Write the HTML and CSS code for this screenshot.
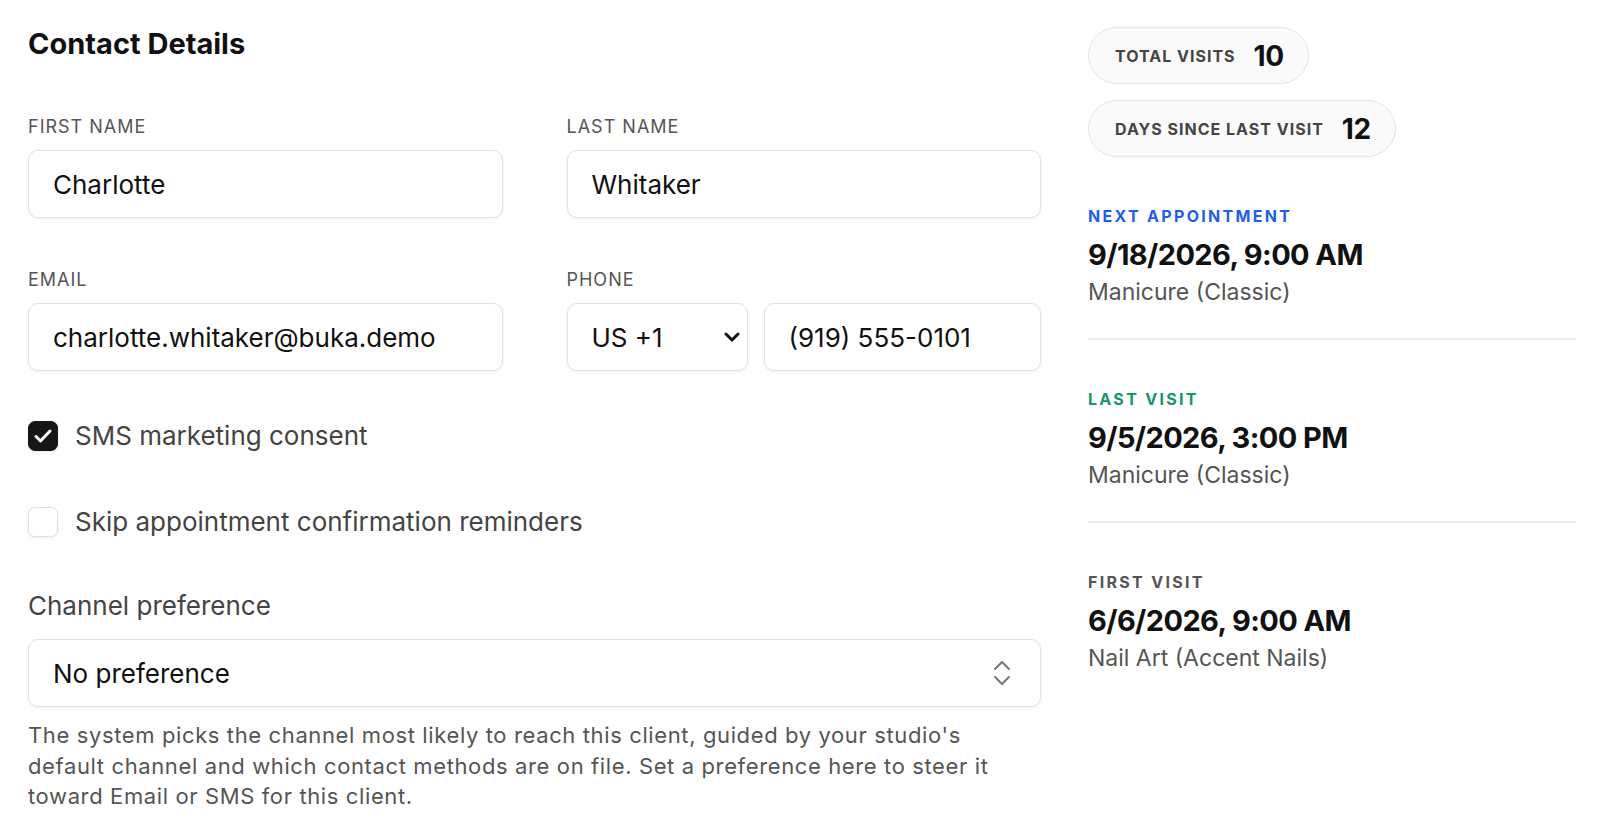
FILE: index.html
```html
<!DOCTYPE html>
<html lang="en">
<head>
<meta charset="utf-8">
<title>Contact Details</title>
<link rel="stylesheet" href="styles.css">
</head>
<body>
<div class="page">
  <section class="form">
    <h2 class="title">Contact Details</h2>

    <div class="row">
      <div class="field">
        <label class="label" for="fn">FIRST NAME</label>
        <input class="input" id="fn" type="text" value="Charlotte">
      </div>
      <div class="field">
        <label class="label" for="ln">LAST NAME</label>
        <input class="input" id="ln" type="text" value="Whitaker">
      </div>
    </div>

    <div class="row">
      <div class="field">
        <label class="label" for="em">EMAIL</label>
        <input class="input" id="em" type="text" value="charlotte.whitaker@buka.demo">
      </div>
      <div class="field">
        <label class="label" for="ph">PHONE</label>
        <div class="phone">
          <div class="select-wrap cc">
            <select class="input select">
              <option>US +1</option>
            </select>
            <svg class="chev" width="16" height="10" viewBox="0 0 16 10"><path d="M2 2 L8 8 L14 2" fill="none" stroke="#111" stroke-width="3" stroke-linecap="round" stroke-linejoin="round"/></svg>
          </div>
          <input class="input" id="ph" type="text" value="(919) 555-0101">
        </div>
      </div>
    </div>

    <div class="checks">
      <label class="check">
        <span class="box on">
          <svg width="20" height="16" viewBox="0 0 20 16"><path d="M3 8.5 L7.5 13 L17 3" fill="none" stroke="#fff" stroke-width="3" stroke-linecap="round" stroke-linejoin="round"/></svg>
        </span>
        <span class="check-text">SMS marketing consent</span>
      </label>
      <label class="check">
        <span class="box"></span>
        <span class="check-text">Skip appointment confirmation reminders</span>
      </label>
    </div>

    <div class="channel">
      <label class="channel-label">Channel preference</label>
      <div class="select-wrap">
        <select class="input select wide">
          <option>No preference</option>
        </select>
        <svg class="updown" width="18" height="26" viewBox="0 0 18 26"><path d="M2 9 L9 2 L16 9 M2 17 L9 24 L16 17" fill="none" stroke="#777" stroke-width="2" stroke-linecap="round" stroke-linejoin="round"/></svg>
      </div>
      <p class="help">The system picks the channel most likely to reach this client, guided by your studio's default channel and which contact methods are on file. Set a preference here to steer it toward Email or SMS for this client.</p>
    </div>
  </section>

  <aside class="side">
    <div class="pills">
      <div class="pill"><span class="pill-label">TOTAL VISITS</span><span class="pill-num">10</span></div>
      <div class="pill"><span class="pill-label">DAYS SINCE LAST VISIT</span><span class="pill-num">12</span></div>
    </div>

    <div class="visits">
      <div class="visit">
        <div class="visit-label blue">NEXT APPOINTMENT</div>
        <div class="visit-date">9/18/2026, 9:00 AM</div>
        <div class="visit-service">Manicure (Classic)</div>
      </div>
      <div class="visit">
        <div class="visit-label green">LAST VISIT</div>
        <div class="visit-date">9/5/2026, 3:00 PM</div>
        <div class="visit-service">Manicure (Classic)</div>
      </div>
      <div class="visit">
        <div class="visit-label gray">FIRST VISIT</div>
        <div class="visit-date">6/6/2026, 9:00 AM</div>
        <div class="visit-service">Nail Art (Accent Nails)</div>
      </div>
    </div>
  </aside>
</div>
</body>
</html>
```

FILE: styles.css
```css
* { box-sizing: border-box; }

html, body {
  margin: 0;
  padding: 0;
  background: #fff;
}

body {
  font-family: Inter, "Noto Sans", "Liberation Sans", sans-serif;
  color: #111;
}

.page {
  display: flex;
  align-items: flex-start;
  gap: 47px;
  padding: 0 24px 0 28px;
}

.form {
  width: 1013px;
  flex: none;
  padding-top: 27px;
}

.title {
  margin: 0;
  font-size: 29px;
  line-height: 34px;
  font-weight: 700;
  color: #111;
}

.row {
  display: grid;
  grid-template-columns: 1fr 1fr;
  column-gap: 64px;
  margin-top: 51px;
}

.row:first-of-type { margin-top: 55px; }

.field {
  display: flex;
  flex-direction: column;
}

.label {
  font-size: 18px;
  line-height: 22px;
  letter-spacing: 1px;
  color: #555;
  margin-bottom: 12px;
}

.input {
  height: 68px;
  width: 100%;
  border: 1px solid #e2e2e2;
  border-radius: 10px;
  background: #fff;
  box-shadow: 0 1px 3px rgba(0, 0, 0, 0.07);
  padding: 0 24px;
  font-family: inherit;
  font-size: 26px;
  color: #111;
  outline: none;
}

.phone {
  display: grid;
  grid-template-columns: 181px 1fr;
  gap: 16px;
}

.select-wrap {
  position: relative;
}

.select {
  appearance: none;
  -webkit-appearance: none;
  cursor: pointer;
}

.chev {
  position: absolute;
  right: 8px;
  top: 29px;
  pointer-events: none;
}

.updown {
  position: absolute;
  right: 30px;
  top: 21px;
  pointer-events: none;
}

.checks {
  display: flex;
  flex-direction: column;
  gap: 56px;
  margin-top: 50px;
}

.check {
  display: flex;
  align-items: center;
  gap: 17px;
  cursor: pointer;
}

.box {
  width: 30px;
  height: 30px;
  flex: none;
  border-radius: 7px;
  border: 1px solid #e0e0e0;
  background: #fff;
  box-shadow: 0 1px 3px rgba(0, 0, 0, 0.08);
  display: flex;
  align-items: center;
  justify-content: center;
}

.box.on {
  background: #161616;
  border-color: #161616;
}

.check-text {
  font-size: 26px;
  line-height: 30px;
  color: #444;
}

.channel {
  margin-top: 54px;
}

.channel-label {
  display: block;
  font-size: 26px;
  line-height: 30px;
  color: #444;
  margin-bottom: 18px;
}

.help {
  margin: 13px 0 0;
  font-size: 22px;
  line-height: 30.5px;
  color: #555;
  letter-spacing: 0.62px;
}

.side {
  width: 488px;
  flex: none;
  padding-top: 27px;
}

.pills {
  display: flex;
  flex-direction: column;
  align-items: flex-start;
  gap: 16px;
}

.pill {
  display: inline-flex;
  align-items: center;
  gap: 18px;
  height: 57px;
  padding: 0 24px 0 26px;
  border: 1px solid #e4e4e4;
  border-radius: 999px;
  background: #fafafa;
}

.pill-label {
  font-size: 16px;
  font-weight: 700;
  letter-spacing: 1px;
  color: #444;
}

.pill-num {
  font-size: 28px;
  font-weight: 700;
  color: #111;
  letter-spacing: -0.5px;
}

.visits {
  margin-top: 49px;
}

.visit + .visit {
  padding-top: 49px;
}

.visit:not(:last-child) {
  padding-bottom: 31px;
  border-bottom: 2px solid #ebebeb;
}

.visit-label {
  font-size: 16px;
  line-height: 20px;
  font-weight: 700;
  letter-spacing: 2.3px;
}

.blue { color: #1f5fe6; }
.green { color: #17946a; }
.gray { color: #555; }

.visit-date {
  margin-top: 11px;
  font-size: 29px;
  line-height: 36px;
  font-weight: 700;
  color: #111;
  letter-spacing: -0.6px;
}

.visit-service {
  margin-top: 4px;
  font-size: 23px;
  line-height: 30px;
  color: #555;
}
```
